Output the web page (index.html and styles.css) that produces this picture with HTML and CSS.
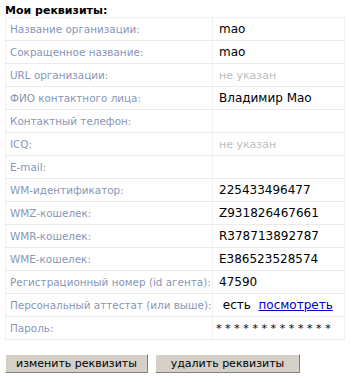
FILE: index.html
```html
<!DOCTYPE html>
<html>
<head>
<meta charset="utf-8">
<link rel="stylesheet" href="styles.css">
</head>
<body>
<div class="page">
  <div class="title">Мои реквизиты:</div>
  <table class="req">
    <tr><td class="lbl">Название организации:</td><td class="val">mao</td></tr>
    <tr><td class="lbl">Сокращенное название:</td><td class="val">mao</td></tr>
    <tr><td class="lbl">URL организации:</td><td class="val none">не указан</td></tr>
    <tr><td class="lbl">ФИО контактного лица:</td><td class="val">Владимир Мао</td></tr>
    <tr><td class="lbl">Контактный телефон:</td><td class="val blur">&nbsp;</td></tr>
    <tr><td class="lbl">ICQ:</td><td class="val none">не указан</td></tr>
    <tr><td class="lbl">E-mail:</td><td class="val blur">&nbsp;</td></tr>
    <tr><td class="lbl">WM-идентификатор:</td><td class="val">225433496477</td></tr>
    <tr><td class="lbl">WMZ-кошелек:</td><td class="val">Z931826467661</td></tr>
    <tr><td class="lbl">WMR-кошелек:</td><td class="val">R378713892787</td></tr>
    <tr><td class="lbl">WME-кошелек:</td><td class="val">E386523528574</td></tr>
    <tr><td class="lbl">Регистрационный номер (id агента):</td><td class="val">47590</td></tr>
    <tr><td class="lbl">Персональный аттестат (или выше):</td><td class="val">&nbsp;есть&nbsp; <a href="#" class="link">посмотреть</a></td></tr>
    <tr><td class="lbl">Пароль:</td><td class="val pw">*************</td></tr>
  </table>
  <div class="buttons">
    <button class="btn b1">изменить реквизиты</button>
    <button class="btn b2">удалить реквизиты</button>
  </div>
</div>
</body>
</html>
```
FILE: styles.css
```css
html, body { margin: 0; padding: 0; background: #fff; }
.page { padding: 4px 5px 0 5px; font-family: "DejaVu Sans", Verdana, sans-serif; }
.title { font-weight: bold; font-size: 11px; color: #000; height: 13px; line-height: 13px; }
.req { border-collapse: collapse; width: 340px; border: 1px solid #f0f0f0; }
.req td { border-bottom: 1px solid #ebebeb; height: 22px; padding: 0; vertical-align: middle; white-space: nowrap; }
.lbl { width: 202px; padding-left: 4px !important; font-size: 10.4px; color: #8796b8; border-right: 1px solid #f0f0f0; }
.val { padding-left: 6px !important; font-size: 12px; color: #000; }
.none { color: #bdbdbd; font-size: 11px; }
.link { color: #0000cc; text-decoration: underline; }
.pw { font-size: 11px; letter-spacing: 3.6px; padding-left: 3px !important; }
.buttons { display: flex; gap: 7px; margin-top: 14px; }
.btn { font-family: "DejaVu Sans", Verdana, sans-serif; font-size: 11px; background: #d4d0c8; color: #000; border: 1px solid; border-color: #fff #808080 #808080 #fff; height: 19px; padding: 0; }
.b1 { width: 143px; }
.b2 { width: 145px; }
```
